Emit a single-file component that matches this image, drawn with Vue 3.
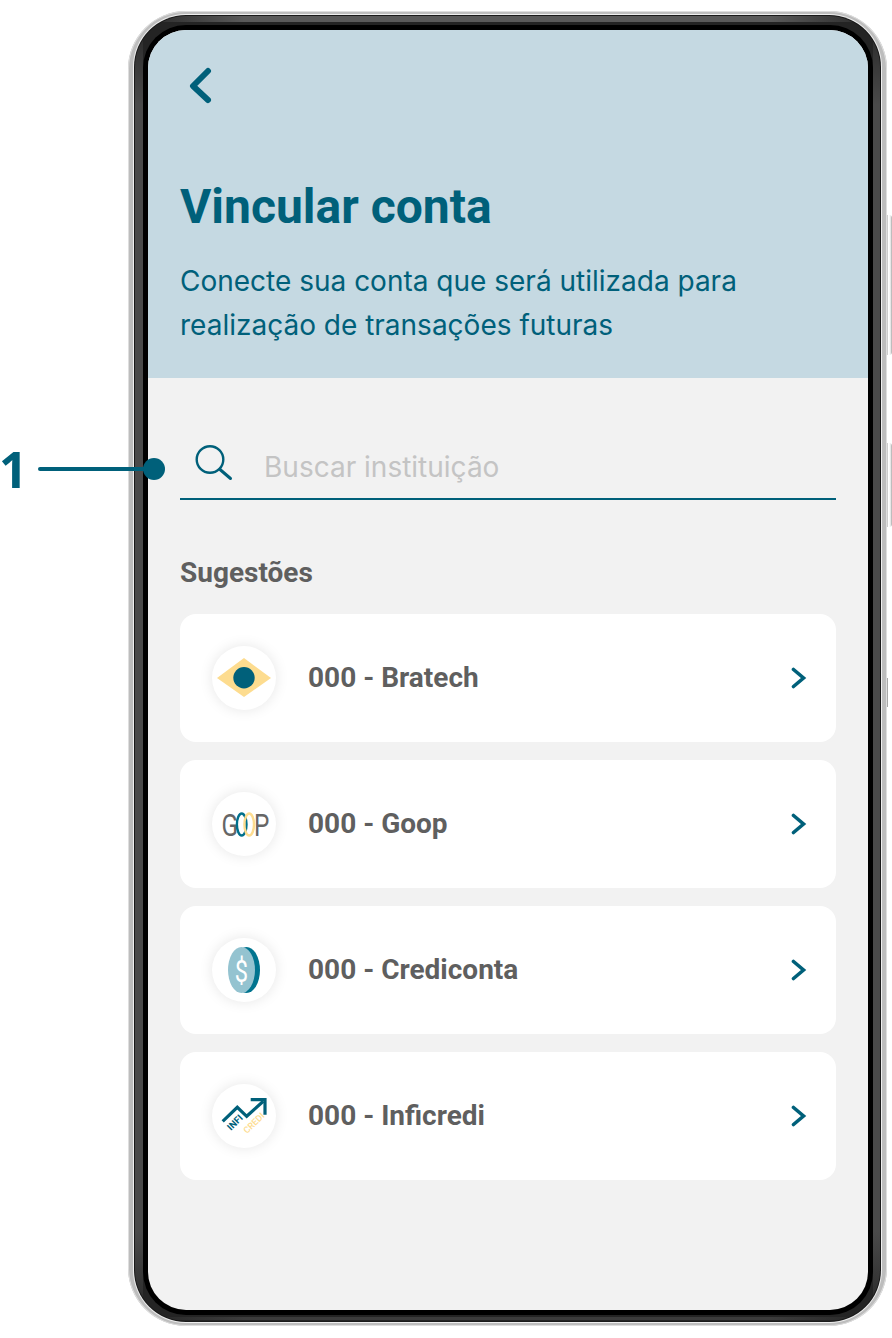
<script setup>
const banks = [
  { id: 'bratech', name: '000 - Bratech' },
  { id: 'goop', name: '000 - Goop' },
  { id: 'crediconta', name: '000 - Crediconta' },
  { id: 'inficredi', name: '000 - Inficredi' },
]
</script>

<template>
  <div class="page">
    <div class="callout">
      <span class="callout-num">1</span>
      <span class="callout-line"></span>
      <span class="callout-dot"></span>
    </div>
    <div class="phone">
      <span class="side-btn btn-a"></span>
      <span class="side-btn btn-b"></span>
      <span class="side-mark"></span>
      <div class="bezel">
        <div class="rim">
          <div class="screen">
            <header class="hero">
              <svg class="back" width="28" height="40" viewBox="0 0 28 40" fill="none">
                <path d="M21 4 L6 19 L21 33" stroke="#00607a" stroke-width="6" stroke-linecap="round" stroke-linejoin="round"/>
              </svg>
              <h1>Vincular conta</h1>
              <p>Conecte sua conta que será utilizada para<br>realização de transações futuras</p>
            </header>
            <main class="content">
              <div class="search">
                <svg class="search-icon" width="38" height="38" viewBox="0 0 38 38" fill="none">
                  <circle cx="15" cy="17.5" r="13.3" stroke="#00607a" stroke-width="2.4"/>
                  <path d="M25 27.5 L35.5 36.5" stroke="#00607a" stroke-width="3" stroke-linecap="round"/>
                </svg>
                <span class="placeholder">Buscar instituição</span>
              </div>
              <h2>Sugestões</h2>
              <ul class="list">
                <li v-for="b in banks" :key="b.id" class="card">
                  <span class="logo">
                    <svg v-if="b.id === 'bratech'" width="64" height="64" viewBox="0 0 64 64">
                      <path d="M32 12 L59 32 L32 51 L5 32 Z" fill="#fddc8f"/>
                      <circle cx="32" cy="31.7" r="10.7" fill="#00607a"/>
                    </svg>
                    <svg v-else-if="b.id === 'goop'" width="64" height="64" viewBox="0 0 64 64" fill="none">
                      <text class="goop-text" transform="translate(9.5 44) scale(.76 1)">G</text>
                      <ellipse cx="29.7" cy="32.5" rx="4.8" ry="11" stroke="#00708c" stroke-width="2.4"/>
                      <ellipse cx="37.2" cy="32.5" rx="4.8" ry="11" stroke="#fddc8f" stroke-width="2.4"/>
                      <text class="goop-text" transform="translate(42 44) scale(.76 1)">P</text>
                    </svg>
                    <svg v-else-if="b.id === 'crediconta'" width="64" height="64" viewBox="0 0 64 64">
                      <ellipse cx="34.5" cy="32" rx="13.5" ry="23" fill="#00748f"/>
                      <ellipse cx="29.5" cy="32" rx="13.5" ry="23" fill="#94c3d0"/>
                      <text class="dollar" text-anchor="middle" transform="translate(29.5 43.5) scale(.74 1)">$</text>
                    </svg>
                    <svg v-else width="64" height="64" viewBox="0 0 64 64" fill="none">
                      <path d="M10.7 37.3 L25.3 23.3 L34.7 32.3 L51.3 17.3" stroke="#00607a" stroke-width="3.2"/>
                      <path d="M38.7 15.7 H53 V30.7" stroke="#00607a" stroke-width="3.2"/>
                      <text class="infi" transform="translate(19 47) rotate(-45)">INFI</text>
                      <text class="credi" transform="translate(35 50) rotate(-44)">CREDI</text>
                    </svg>
                  </span>
                  <span class="name">{{ b.name }}</span>
                  <svg class="chev" width="16" height="22" viewBox="0 0 16 22" fill="none">
                    <path d="M2.5 2.5 L12.5 11 L2.5 19.5" stroke="#00607a" stroke-width="3.6" stroke-linecap="round"/>
                  </svg>
                </li>
              </ul>
            </main>
          </div>
        </div>
      </div>
    </div>
  </div>
</template>

<style>
html, body { margin: 0; background: #fff; }
</style>

<style scoped>
.page {
  position: relative;
  width: 892px;
  height: 1338px;
  padding: 11px 0 0 128px;
  box-sizing: border-box;
  overflow: hidden;
  background: #fff;
}
.phone {
  position: relative;
  width: 759px;
  height: 1315px;
  box-sizing: border-box;
  padding: 4px 6px;
  border-radius: 58px;
  background: #bdbdbd;
  box-shadow: inset 0 0 0 1px #dedede;
}
.side-btn {
  position: absolute;
  right: -5px;
  width: 5px;
  border-radius: 0 3px 3px 0;
  background: linear-gradient(90deg, #b4b4b4, #fff 30%, #f2f2f2 65%, #a8a8a8);
}
.btn-a { top: 204px; height: 140px; }
.btn-b { top: 432px; height: 84px; }
.side-mark {
  position: absolute;
  right: -1px;
  top: 667px;
  width: 1px;
  height: 29px;
  background: #a8a8a8;
}
.bezel {
  height: 100%;
  box-sizing: border-box;
  padding: 10px 8px 7px 9px;
  border-radius: 52px;
  background-color: #242424;
  background-image:
    linear-gradient(90deg, #242424 0, #5a5a5a 110px, #5a5a5a calc(100% - 110px), #242424 100%),
    linear-gradient(90deg, #242424 0, #3c3c3c 110px, #3c3c3c calc(100% - 110px), #242424 100%),
    linear-gradient(180deg, #242424 0, #4a4a4a 90px, #4a4a4a calc(100% - 90px), #242424 100%),
    linear-gradient(180deg, #242424 0, #4a4a4a 90px, #4a4a4a calc(100% - 90px), #242424 100%);
  background-repeat: no-repeat;
  background-size: 100% 6px, 100% 3px, 9px 100%, 8px 100%;
  background-position: 0 1px, 0 calc(100% - 2px), 0 0, 100% 0;
  box-shadow: inset 0 0 0 1px #1a1a1a, 0 0 0 1px #efefef;
}
.rim {
  height: 100%;
  box-sizing: border-box;
  padding: 5px;
  border-radius: 43px;
  background: #000;
}
.screen {
  height: 100%;
  border-radius: 38px;
  overflow: hidden;
  background: #f2f2f2;
  display: flex;
  flex-direction: column;
}
.hero {
  height: 348px;
  box-sizing: border-box;
  flex: none;
  background: #c5d9e2;
  padding: 37px 32px 0;
  color: #00607a;
}
.back { display: block; margin-left: 7px; }
h1 {
  margin: 70px 0 0;
  font: 700 48px/60px Roboto, sans-serif;
}
p {
  margin: 22px 0 0;
  font: 400 28px/44px Inter, sans-serif;
}
.content {
  flex: 1;
  padding: 0 32px;
}
.search {
  height: 122px;
  box-sizing: border-box;
  padding: 64px 0 0 15px;
  border-bottom: 2px solid #00607a;
  display: flex;
  align-items: flex-start;
  gap: 31px;
}
.search-icon { overflow: visible; flex: none; }
.placeholder {
  font: 400 28px/38px Inter, sans-serif;
  color: #c4c4c4;
  margin-top: 6px;
}
h2 {
  margin: 53px 0 0;
  font: 700 28px/40px Roboto, sans-serif;
  color: #5f5f5f;
}
.list {
  list-style: none;
  margin: 21px 0 0;
  padding: 0;
  display: flex;
  flex-direction: column;
  gap: 18px;
}
.card {
  height: 128px;
  box-sizing: border-box;
  background: #fff;
  border-radius: 16px;
  padding: 0 29px 0 32px;
  display: flex;
  align-items: center;
}
.logo {
  width: 64px;
  height: 64px;
  flex: none;
  border-radius: 50%;
  background: #fff;
  box-shadow: 0 0 14px rgba(0, 0, 0, 0.1);
}
.logo svg { display: block; }
.name {
  flex: 1;
  margin-left: 32px;
  font: 700 28px/40px Roboto, sans-serif;
  color: #5f5f5f;
}
.chev { flex: none; }
.goop-text { font: 400 32px Roboto, sans-serif; fill: #666; }
.dollar { font: 400 32px Roboto, sans-serif; fill: #fff; }
.infi { font: 700 9.5px Roboto, sans-serif; fill: #00607a; }
.credi { font: 500 9px Roboto, sans-serif; fill: #fddc8f; }
.callout {
  position: absolute;
  left: 0;
  top: 0;
  z-index: 2;
}
.callout-num {
  position: absolute;
  left: -1px;
  top: 439px;
  font: 700 50px/60px "Open Sans", sans-serif;
  color: #00607a;
}
.callout-line {
  position: absolute;
  left: 38px;
  top: 467px;
  width: 110px;
  height: 4px;
  border-radius: 2px;
  background: #00607a;
}
.callout-dot {
  position: absolute;
  left: 143px;
  top: 458px;
  width: 22px;
  height: 22px;
  border-radius: 50%;
  background: #00607a;
}
</style>
